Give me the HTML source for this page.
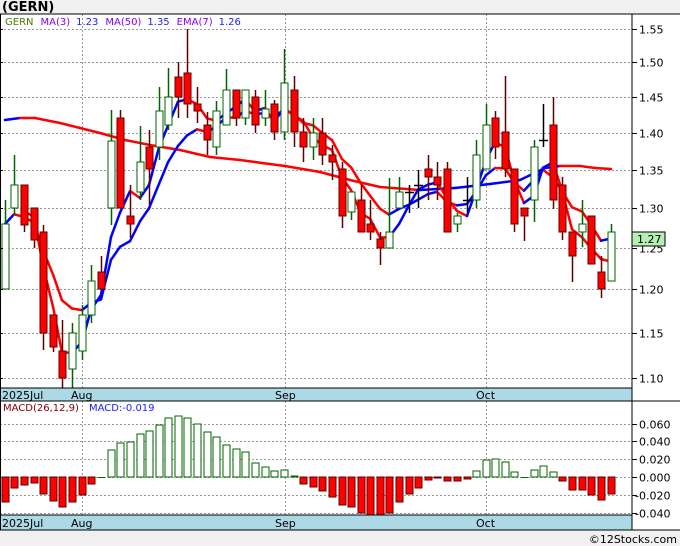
<!DOCTYPE html>
<html><head><meta charset="utf-8"><style>
html,body{margin:0;padding:0;background:#f0f0f0;}
svg{display:block;font-family:"DejaVu Sans","Liberation Sans",sans-serif;}
</style></head><body>
<svg id="s" width="680" height="546" viewBox="0 0 680 546" xmlns="http://www.w3.org/2000/svg">
<rect x="0" y="0" width="680" height="546" fill="#f0f0f0"/>
<rect x="0" y="14" width="680" height="516" fill="#fff"/>
<text x="2" y="11" font-size="13" font-weight="bold" fill="#000">(GERN)</text>
<g id="grid" stroke="#999" stroke-width="1" stroke-dasharray="2,2"></g>
<g id="lines"></g>
<g id="c"></g>
<g id="m"></g>
<text x="5" y="25" font-size="10"><tspan fill="#4a7a00">GERN</tspan><tspan fill="#8000ff" dx="7">MA(3)</tspan><tspan fill="#2020ff" dx="6">1.23</tspan><tspan fill="#8000ff" dx="7">MA(50)</tspan><tspan fill="#2020ff" dx="6">1.35</tspan><tspan fill="#8000ff" dx="7">EMA(7)</tspan><tspan fill="#2020ff" dx="6">1.26</tspan></text>
<text x="3" y="411" font-size="10"><tspan fill="#800000">MACD(26,12,9)</tspan><tspan fill="#2020ff" dx="10">MACD:-0.019</tspan></text>
<rect x="0" y="388" width="632" height="13" fill="#add8e6" stroke="#000"/>
<rect x="0" y="515" width="632" height="15" fill="#add8e6" stroke="#000"/>
<g font-size="11" fill="#000">
<text x="2" y="399">2025Jul</text><text x="71" y="399">Aug</text><text x="275" y="399">Sep</text><text x="476" y="399">Oct</text>
<text x="2" y="527">2025Jul</text><text x="71" y="527">Aug</text><text x="275" y="527">Sep</text><text x="476" y="527">Oct</text>
</g>
<line x1="0" y1="14" x2="680" y2="14" stroke="#000"/>
<line x1="632" y1="14" x2="632" y2="530" stroke="#000"/>
<line x1="0.5" y1="14" x2="0.5" y2="530" stroke="#000"/>
<line x1="0" y1="401" x2="680" y2="401" stroke="#000"/>
<line x1="0" y1="530" x2="680" y2="530" stroke="#000"/>
<g id="ax" font-size="11" fill="#000"></g>
<rect x="632" y="232" width="33" height="14" fill="#b4f0b4" stroke="#000"/>
<text x="637" y="243" font-size="11" fill="#000">1.27</text>
<text x="677" y="543" font-size="11" fill="#000" text-anchor="end">©12Stocks.com</text>
</svg>
<script>
var NS="http://www.w3.org/2000/svg";
function el(p,t,a){var e=document.createElementNS(NS,t);for(var k in a)e.setAttribute(k,a[k]);document.getElementById(p).appendChild(e);return e;}
function yp(p){return 29+(Math.log(1.55)-Math.log(p))*1017.5;}
for(var i=0;i<10;i++){var p=1.55-i*0.05,y=Math.round(yp(p))+0.5;
 el('grid','line',{x1:0,y1:y,x2:632,y2:y});
 el('ax','line',{x1:632,y1:y,x2:637,y2:y,stroke:'#000'});
 el('ax','line',{x1:0,y1:y,x2:3,y2:y,stroke:'#000'});
 var t=el('ax','text',{x:639,y:y+4});t.textContent=p.toFixed(2);}
var mv=[[424,'0.060'],[441,'0.040'],[459,'0.020'],[477,'0.000'],[495,'-0.020'],[513,'-0.040']];
mv.forEach(function(v){var y=v[0]+0.5;el('grid','line',{x1:0,y1:y,x2:632,y2:y});
 el('ax','line',{x1:632,y1:y,x2:637,y2:y,stroke:'#000'});
 var t=el('ax','text',{x:v[1][0]=='-'?635:639,y:y+4});t.textContent=v[1];});
[82,285,486].forEach(function(x){el('grid','line',{x1:x+0.5,y1:14,x2:x+0.5,y2:388});el('grid','line',{x1:x+0.5,y1:401,x2:x+0.5,y2:515});});
var C=[[5,200,289,224,289,'u'],[14,155,215,185,208,'u'],[24,185,232,185,225,'d'],[34,208,248,208,240,'d'],[43,225,350,232,333,'d'],[53,315,352,315,347,'d'],[62,320,388,351,378,'d'],[72,323,388,333,369,'u'],[82,305,360,315,351,'u'],[91,265,323,281,315,'u'],[101,256,289,272,289,'d'],
[111,110,225,141,208,'u'],[120,110,208,118,208,'d'],[130,185,238,216,224,'d'],[140,126,200,162,192,'u'],[149,130,205,147,169,'d'],[159,87,160,111,147,'u'],[168,68,130,97,125,'u'],[178,62,118,77,97,'d'],[187,29,118,73,104,'d'],[197,87,123,104,111,'d'],[207,112,155,125,140,'d'],[216,101,155,111,147,'u'],[226,69,125,90,125,'u'],[236,90,126,90,118,'d'],[245,90,125,90,118,'u'],[255,90,133,97,125,'d'],[265,90,126,109,118,'u'],[274,100,140,104,132,'d'],[284,49,140,83,132,'u'],[294,76,147,90,132,'d'],[303,118,162,132,147,'d'],[313,118,160,133,147,'u'],[322,118,165,133,155,'d'],[332,145,180,155,162,'d'],
[342,162,228,169,216,'d'],[351,192,220,192,212,'u'],[361,185,232,200,232,'d'],[370,200,240,224,232,'d'],[380,232,265,239,248,'d'],[389,178,248,232,248,'u'],[399,177,208,192,208,'u'],[409,185,213,192,192,'n'],[418,170,208,185,185,'n'],[428,155,200,169,177,'d'],[437,162,200,177,185,'d'],[447,162,232,169,232,'d'],[457,213,232,216,224,'u'],[467,177,213,200,200,'n'],[476,140,208,155,200,'u'],[486,104,169,125,169,'u'],[495,111,159,118,147,'d'],[505,76,177,132,169,'d'],[514,169,232,169,224,'d'],[524,208,241,208,216,'d'],[534,140,222,147,200,'u'],[543,104,147,140,140,'n'],[553,97,209,125,200,'d'],[562,177,240,185,232,'d'],[572,232,282,232,256,'d'],[582,200,247,224,232,'u'],[591,216,264,216,264,'d'],[601,256,298,272,289,'d'],[611,224,281,232,281,'u']];
var cl=[];
C.forEach(function(c){var x=c[0],col=c[5]=='u'?'#006400':(c[5]=='d'?'#600000':'#000');
 el('c','line',{x1:x+0.5,y1:c[1],x2:x+0.5,y2:c[2],stroke:col,'stroke-width':1.5});
 if(c[5]=='n'){el('c','line',{x1:x-4,y1:c[3]+0.5,x2:x+5,y2:c[3]+0.5,stroke:'#000','stroke-width':1.5});cl.push(c[3]);}
 else{el('c','rect',{x:x-3,y:c[3],width:7,height:Math.max(2,c[4]-c[3]),fill:c[5]=='u'?'#fff':'#ff0000',stroke:col,'stroke-width':1});
 cl.push(c[5]=='u'?c[3]:c[4]);}
});
function seg(pts){for(var i=1;i<pts.length;i++){var a=pts[i-1],b=pts[i];
 el('lines','line',{x1:a[0],y1:a[1],x2:b[0],y2:b[1],stroke:b[1]<a[1]?'#0000ff':'#ff0000','stroke-width':2.5,'stroke-linecap':'round'});}}
var ma3=[],ema=[],e=cl[0];
for(var i=0;i<C.length;i++){if(i>=2)ma3.push([C[i][0],(cl[i]+cl[i-1]+cl[i-2])/3]);e=i==0?cl[0]:e+(cl[i]-e)*0.25;ema.push([C[i][0],e]);}
seg([[5,120],[20,118],[35,118],[60,123],[80,128],[100,133],[125,140],[150,145],[180,150],[210,157],[240,160],[262,163],[285,166],[320,172],[350,180],[380,187],[420,190],[455,188],[490,184],[520,180],[545,168],[560,166],[580,166],[595,168],[611,169]]);
seg(ema);seg(ma3);
var M=[502,488,485,483,494,501,507,502,495,484,477,450,443,442,434,431,425,418,416,418,424,432,437,445,449,452,463,467,471,470,476,484,487,491,497,505,507,513,515,515,513,502,494,488,480,478,481,481,479,471,460,459,462,472,477,470,466,472,481,490,490,495,500,494];
for(var i=0;i<C.length;i++){var x=C[i][0],v=M[i];
 if(Math.abs(v-477)<1){el('m','line',{x1:x-3,y1:477.5,x2:x+4,y2:477.5,stroke:'#006400'});continue;}
 if(v<477)el('m','rect',{x:x-3,y:v,width:7,height:477-v,fill:'#fff',stroke:'#006400'});
 else el('m','rect',{x:x-3,y:477,width:7,height:v-477,fill:'#ff0000',stroke:'#600000'});}
</script>
</body></html>
